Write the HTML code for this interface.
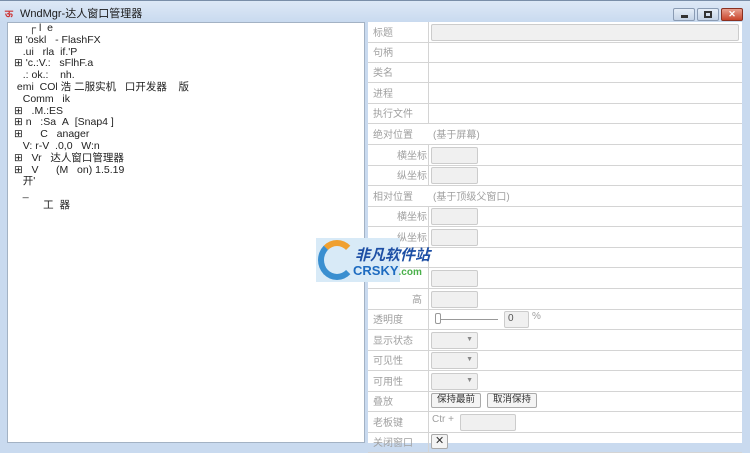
<!DOCTYPE html><html><head><meta charset="utf-8"><style>
*{margin:0;padding:0;box-sizing:border-box}
body{width:750px;height:443px;overflow:hidden;background:#c9daef;font-family:"Liberation Sans","Noto Sans CJK SC",sans-serif;position:relative}
.tb{position:absolute;left:0;top:0;width:750px;height:22px;background:linear-gradient(#dde8f6,#c9daef);border-top:1px solid #7a8ea8}
.tt{position:absolute;left:20px;top:4px;font-size:11px;color:#1a1a1a}
.btn{position:absolute;top:7px;height:13px;border:1px solid #8a9bb3;border-radius:2px;background:linear-gradient(#e6eef8,#c4d3e6)}
.left{position:absolute;left:7px;top:22px;width:358px;height:421px;background:#fff;border:1px solid #a3b2c4}
.tree{position:absolute;left:14px;top:23px;font-size:10.5px;color:#222;line-height:11.8px;white-space:nowrap}
.right{position:absolute;left:368px;top:22px;width:374px;height:421px;background:#fff}
.row{position:absolute;left:0;width:374px;height:21px;border-bottom:1px solid #d4d4d4}
.lab{position:absolute;left:5px;top:2px;font-size:10px;color:#a0a0a0}
.vl{position:absolute;left:60px;top:0;width:1px;height:100%;background:#d4d4d4}
.inp{position:absolute;top:2px;height:17px;background:#f0f0f0;border:1px solid #ccc;border-radius:2px}
.t{position:absolute;top:2px;font-size:10px;color:#a0a0a0}
.b{position:absolute;top:2px;height:15px;border:1px solid #aaa;border-radius:2px;background:#f4f4f4;font-size:9.5px;line-height:12px;padding:0 5px;color:#333}
</style></head><body>
<div class="tb"><div style="position:absolute;left:5px;top:5px;width:11px;height:10px;color:#c33;font-size:10px;font-weight:bold">ऊ</div><div class="tt">WndMgr-达人窗口管理器</div>
<div class="btn" style="left:673px;width:22px"><div style="position:absolute;left:7px;top:6px;width:7px;height:3px;background:#333"></div></div>
<div class="btn" style="left:697px;width:22px"><div style="position:absolute;left:6px;top:2px;width:8px;height:7px;border:2px solid #333"></div></div>
<div class="btn" style="left:721px;width:22px;background:linear-gradient(#e8a090,#c9452c);border-color:#8a3020;color:#fff;font-size:9px;text-align:center;line-height:11px;font-weight:bold">✕</div></div>
<div class="left"></div>
<div class="tree">
<div>&nbsp;&nbsp;&nbsp;&nbsp;&nbsp;┌ l&nbsp;&nbsp;e</div>
<div>⊞ 'oskl&nbsp;&nbsp;&nbsp;- FlashFX</div>
<div>&nbsp;&nbsp;&nbsp;.ui&nbsp;&nbsp;&nbsp;rla&nbsp;&nbsp;if.'P</div>
<div>⊞ 'c.:V.:&nbsp;&nbsp;&nbsp;sFlhF.a</div>
<div>&nbsp;&nbsp;&nbsp;.:&nbsp;ok.:&nbsp;&nbsp;&nbsp;&nbsp;nh.</div>
<div>&nbsp;emi&nbsp;&nbsp;COl&nbsp;浩&nbsp;二服实机&nbsp;&nbsp;&nbsp;口开发器&nbsp;&nbsp;&nbsp;&nbsp;版</div>
<div>&nbsp;&nbsp;&nbsp;Comm&nbsp;&nbsp;&nbsp;ik</div>
<div>⊞&nbsp;&nbsp;&nbsp;.M.:ES</div>
<div>⊞ n&nbsp;&nbsp;&nbsp;:Sa&nbsp;&nbsp;A&nbsp;&nbsp;[Snap4&nbsp;]</div>
<div>⊞&nbsp;&nbsp;&nbsp;&nbsp;&nbsp;&nbsp;C&nbsp;&nbsp;&nbsp;anager</div>
<div>&nbsp;&nbsp;&nbsp;V:&nbsp;r-V&nbsp;&nbsp;.0,0&nbsp;&nbsp;&nbsp;W:n</div>
<div>⊞&nbsp;&nbsp;&nbsp;Vr&nbsp;&nbsp;&nbsp;达人窗口管理器</div>
<div>⊞&nbsp;&nbsp;&nbsp;V&nbsp;&nbsp;&nbsp;&nbsp;&nbsp;&nbsp;(M&nbsp;&nbsp;&nbsp;on)&nbsp;1.5.19</div>
<div>&nbsp;&nbsp;&nbsp;开'</div>
<div>&nbsp;&nbsp;&nbsp;_</div>
<div>&nbsp;&nbsp;&nbsp;&nbsp;&nbsp;&nbsp;&nbsp;&nbsp;&nbsp;&nbsp;工&nbsp;&nbsp;器</div>
</div>
<div class="right">
<div class="row" style="top:0"><div class="lab">标题</div><div class="vl"></div><div class="inp" style="left:63px;width:308px"></div></div>
<div class="row" style="top:20px"><div class="lab">句柄</div><div class="vl"></div></div>
<div class="row" style="top:40px"><div class="lab">类名</div><div class="vl"></div></div>
<div class="row" style="top:61px"><div class="lab">进程</div><div class="vl"></div></div>
<div class="row" style="top:81px"><div class="lab">执行文件</div><div class="vl"></div></div>
<div class="row" style="top:102px"><div class="lab">绝对位置</div><div class="t" style="left:65px">(基于屏幕)</div></div>
<div class="row" style="top:123px"><div class="lab" style="left:29px">横坐标</div><div class="vl"></div><div class="inp" style="left:63px;width:47px"></div></div>
<div class="row" style="top:143px"><div class="lab" style="left:29px">纵坐标</div><div class="vl"></div><div class="inp" style="left:63px;width:47px"></div></div>
<div class="row" style="top:164px"><div class="lab">相对位置</div><div class="t" style="left:65px">(基于顶级父窗口)</div></div>
<div class="row" style="top:184px"><div class="lab" style="left:29px">横坐标</div><div class="vl"></div><div class="inp" style="left:63px;width:47px"></div></div>
<div class="row" style="top:205px"><div class="lab" style="left:29px">纵坐标</div><div class="vl"></div><div class="inp" style="left:63px;width:47px"></div></div>
<div class="row" style="top:225px"><div class="vl"></div></div>
<div class="row" style="top:246px"><div class="vl"></div><div class="inp" style="left:63px;width:47px"></div></div>
<div class="row" style="top:267px"><div class="lab" style="left:44px">高</div><div class="vl"></div><div class="inp" style="left:63px;width:47px"></div></div>
<div class="row" style="top:287px"><div class="lab">透明度</div><div class="vl"></div><div style="position:absolute;left:70px;top:10px;width:60px;height:1px;background:#999"></div><div style="position:absolute;left:67px;top:4px;width:6px;height:11px;border:1px solid #999;border-radius:2px;background:#fff"></div><div class="inp" style="left:136px;width:25px;font-size:10px;color:#555;padding:1px 3px">0</div><div class="t" style="left:164px">%</div></div>
<div class="row" style="top:308px"><div class="lab">显示状态</div><div class="vl"></div><div class="inp" style="left:63px;width:47px;font-size:7px;color:#888;text-align:right;padding:3px 4px">▼</div></div>
<div class="row" style="top:328px"><div class="lab">可见性</div><div class="vl"></div><div class="inp" style="left:63px;width:47px;font-size:7px;color:#888;text-align:right;padding:3px 4px">▼</div></div>
<div class="row" style="top:349px"><div class="lab">可用性</div><div class="vl"></div><div class="inp" style="left:63px;width:47px;font-size:7px;color:#888;text-align:right;padding:3px 4px">▼</div></div>
<div class="row" style="top:369px"><div class="lab">叠放</div><div class="vl"></div><div class="b" style="left:63px">保持最前</div><div class="b" style="left:119px">取消保持</div></div>
<div class="row" style="top:390px"><div class="lab">老板键</div><div class="vl"></div><div class="t" style="left:64px">Ctr +</div><div class="inp" style="left:92px;width:56px"></div></div>
<div class="row" style="top:410px"><div class="lab">关闭窗口</div><div class="vl"></div><div class="b" style="left:63px;padding:0 3px;font-size:11px">✕</div></div>
</div>
<div style="position:absolute;left:316px;top:238px;width:84px;height:44px;background:#d8eaf7"></div>
<div style="position:absolute;left:318px;top:240px;width:38px;height:40px;border-radius:50%;border:6px solid #3a8fd0;border-right-color:transparent;border-top-color:#f0a030"></div>
<div style="position:absolute;left:355px;top:244px;font-size:15px;font-weight:bold;font-style:italic;color:#1d4fa5">非凡软件站</div>
<div style="position:absolute;left:353px;top:263px;font-size:13px;font-weight:bold;color:#1d6bc0">CRSKY<span style="color:#4ab04a;font-size:10px">.com</span></div>
</body></html>
